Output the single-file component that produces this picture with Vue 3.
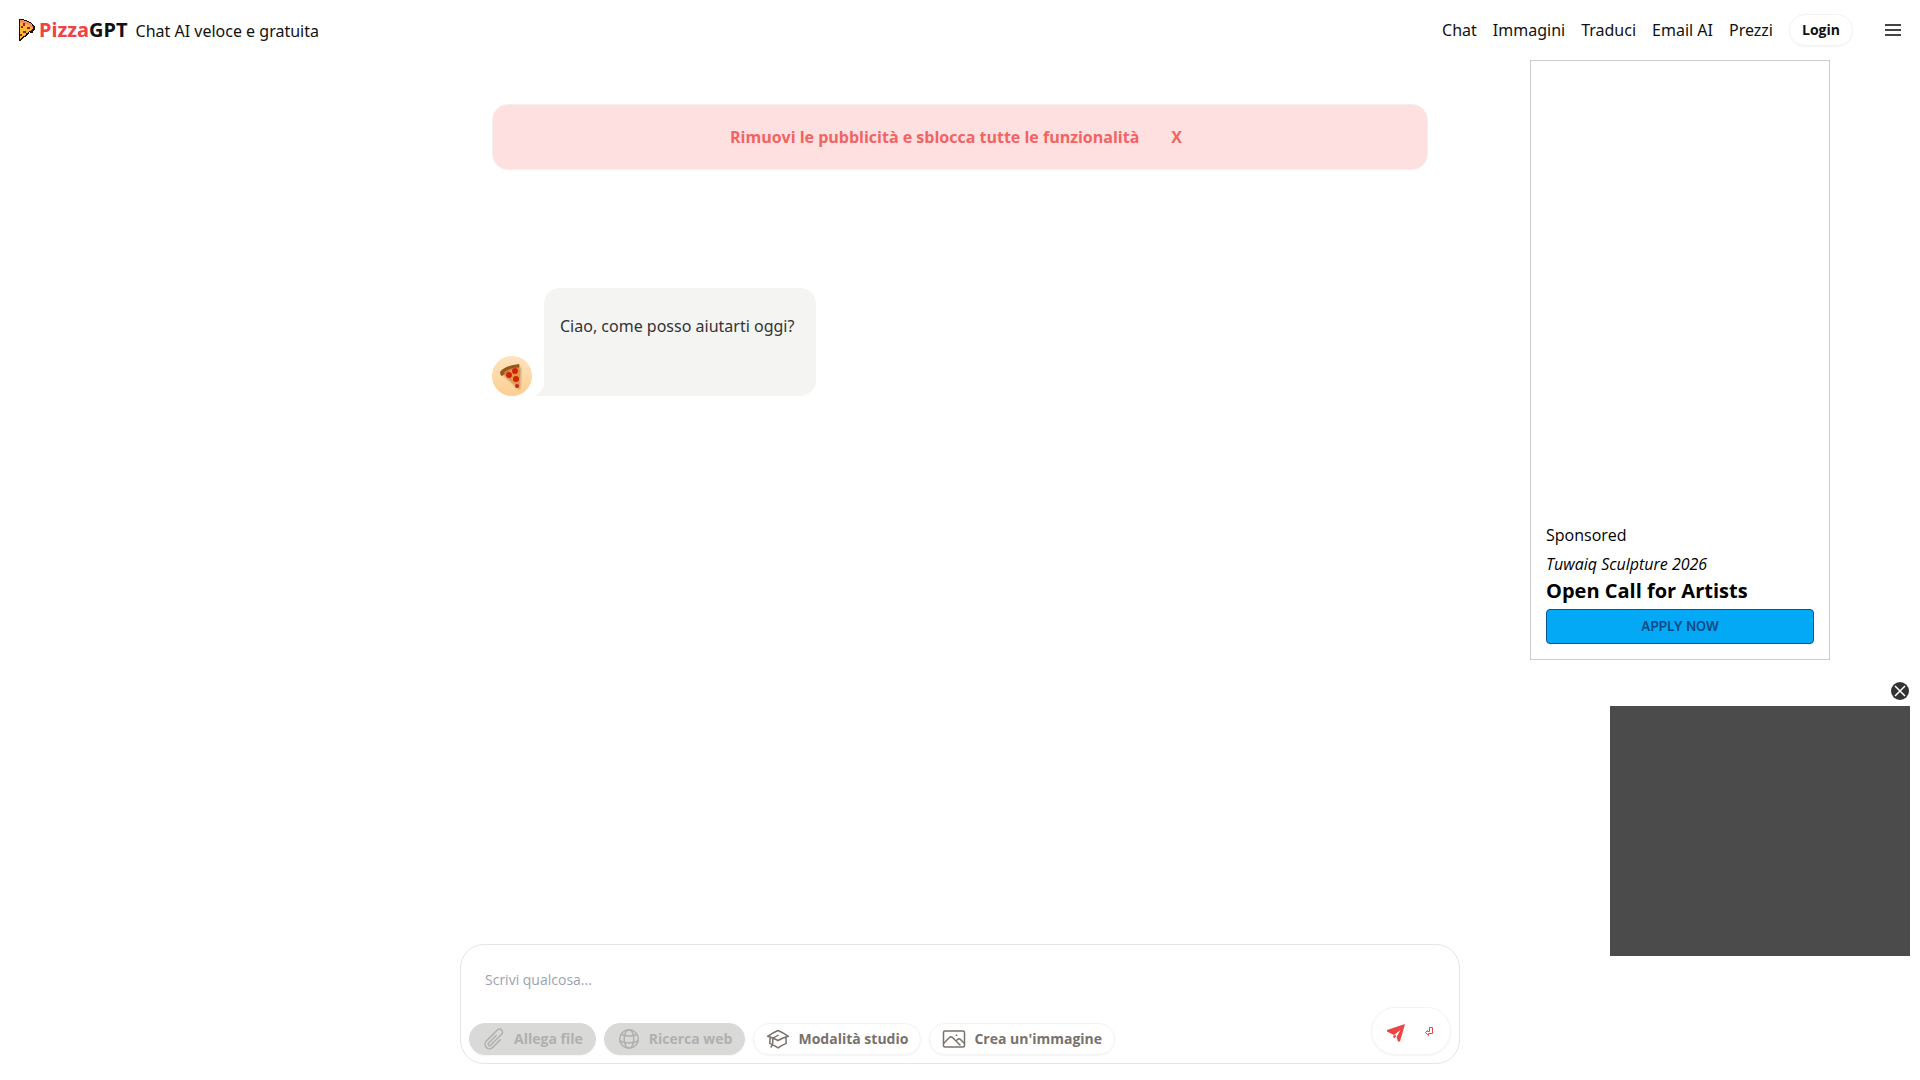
<script setup>
import { ref } from 'vue'

const links = ['Chat', 'Immagini', 'Traduci', 'Email AI', 'Prezzi']
const message = ref('')
</script>

<template>
  <div class="page">
    <header class="topbar">
      <a class="brand" href="#">
        <svg class="slice" viewBox="0 0 16 22" shape-rendering="crispEdges" aria-hidden="true">
          <path fill="#111" d="M0 0h5v1h3v1h2v1h2v1h1v1h1v1h1v1h1v4h-1v1h-1v2h-3v-1h-1v2H9v1H8v1H7v1H5v1H4v1H3v1H2v1H0z" />
          <path fill="#f9b934" d="M1 3h5v1h3v1h2v2h2v4h-1v1h-2v1H9v1H7v2H6v1H4v1H3v1H2v1H1z" />
          <path fill="#f58a5b" d="M1 1h4v1h3v1h2v1h2v1h1v2h1v3h-1V8h-2V6H9V5H6V4H1z" />
          <path fill="#a61e2c" d="M4 4h2v3H4zM8 8h3v2H8zM2 7h2v2H2zM4 12h3v2H4zM1 15h2v2H1z" />
        </svg>
        <span class="name"><span class="red">Pizza</span>GPT</span>
        <span class="tagline">Chat AI veloce e gratuita</span>
      </a>
      <nav class="nav">
        <a v-for="link in links" :key="link" href="#">{{ link }}</a>
        <button class="pill login" type="button">Login</button>
        <button class="menu" type="button" aria-label="Menu">
          <svg viewBox="0 0 16 16" stroke="#444" stroke-width="2" aria-hidden="true">
            <path d="M0 3h16M0 8h16M0 13h16" />
          </svg>
        </button>
      </nav>
    </header>

    <div class="body">
      <main class="chat">
        <div class="thread">
          <div class="banner">
            <a href="#">Rimuovi le pubblicità e sblocca tutte le funzionalità</a>
            <button type="button">X</button>
          </div>
          <div class="message">
            <svg class="avatar" viewBox="0 0 40 40" aria-hidden="true">
              <defs>
                <linearGradient id="plate" x1="0" y1="0" x2="0" y2="1">
                  <stop offset="0" stop-color="#ffe3bd" />
                  <stop offset="1" stop-color="#fdce92" />
                </linearGradient>
                <filter id="soft" x="-30%" y="-30%" width="160%" height="160%"><feGaussianBlur stdDeviation="0.6" /></filter>
                <filter id="shade" x="-30%" y="-30%" width="160%" height="160%"><feGaussianBlur stdDeviation="1.2" /></filter>
              </defs>
              <circle cx="20" cy="20" r="20" fill="url(#plate)" />
              <path d="M10 18 29 11 28 34z" fill="#8a6a4a" opacity=".6" filter="url(#shade)" />
              <g filter="url(#soft)">
                <path d="M10 17 27 11 27 32z" fill="#e59a3c" />
                <path d="M8 16Q14 9 27 8q1 2 0 4-11 1-17 8-2-1-2-4z" fill="#96551c" />
                <path d="M12 17Q18 12 27 12" stroke="#d79a45" fill="none" />
                <g fill="#cf2414">
                  <circle cx="17" cy="19" r="3" /><circle cx="23" cy="15" r="3" /><circle cx="24" cy="23" r="3" /><circle cx="25" cy="30" r="2" />
                </g>
              </g>
            </svg>
            <div class="bubble">
              <p>Ciao, come posso aiutarti oggi?</p>
              <svg class="tail" viewBox="0 0 12 12" aria-hidden="true"><path fill="#f4f4f3" d="M12 0Q8 9 1 12h11z" /></svg>
            </div>
          </div>
        </div>

        <form class="composer" @submit.prevent>
          <textarea v-model="message" rows="1" placeholder="Scrivi qualcosa..." aria-label="Messaggio"></textarea>
          <div class="tools">
            <button class="pill tool" type="button" disabled>
              <svg viewBox="0 0 24 24" aria-hidden="true">
                <path d="m18.4 12.7-7.7 7.7a4.5 4.5 0 0 1-6.4-6.4L15.3 3a3 3 0 0 1 4.3 4.3L8.6 18.3a1.5 1.5 0 0 1-2.1-2.1l7.7-7.7" />
              </svg>
              Allega file
            </button>
            <button class="pill tool" type="button" disabled>
              <svg viewBox="0 0 24 24" aria-hidden="true">
                <circle cx="12" cy="12" r="9.3" />
                <ellipse cx="12" cy="12" rx="4.8" ry="9.3" />
                <path d="M4 7.5q8 3 16 0M3 14q9 4 18 0" />
              </svg>
              Ricerca web
            </button>
            <button class="pill tool" type="button">
              <svg viewBox="0 0 24 24" aria-hidden="true">
                <path d="M4.3 10.1a60 60 0 0 0-.5 6.3A48 48 0 0 1 12 20.9a48 48 0 0 1 8.2-4.5 60 60 0 0 0-.4-6.3M1.6 9.3A60 60 0 0 1 12 3.5a60 60 0 0 1 10.4 5.8A51 51 0 0 0 12 13.5 51 51 0 0 0 1.6 9.3M6.8 15v-3.7A55 55 0 0 1 12 8.4M5 20a6 6 0 0 0 1.8-4.2V15" />
              </svg>
              Modalità studio
            </button>
            <button class="pill tool" type="button">
              <svg viewBox="0 0 24 24" aria-hidden="true">
                <rect x="1.5" y="4" width="21" height="16" rx="1.5" />
                <path d="m2 16 5.5-5.5q1.500-1.500 3 0L18 18M14 14l1.500-1.500q1.500-1.500 3 0L22 16M14.200 8.300h.6" />
              </svg>
              Crea un'immagine
            </button>
            <button class="pill send" type="submit" aria-label="Invia">
              <svg class="plane" viewBox="0 0 18 18" aria-hidden="true">
                <path fill="#ef4444" d="M18 0 13 17.5h-2L9.5 13 13.5 6 7 11 0 7.5V6z" />
                <path fill="#ef4444" d="m6 12 2.5-1.500.5 2-2 2z" />
              </svg>
              <svg class="enter" viewBox="0 0 8 9" fill="none" stroke="#ef4444" aria-hidden="true">
                <path d="M4.5.5h3v6h-4v2l-3-3 2-2v1h2z" />
              </svg>
            </button>
          </div>
        </form>
      </main>

      <aside class="ad">
        <p class="sponsored">Sponsored</p>
        <p class="event">Tuwaiq Sculpture 2026</p>
        <h2>Open Call for Artists</h2>
        <a class="apply" href="#">APPLY NOW</a>
      </aside>
    </div>

    <div class="player">
      <button type="button" aria-label="Chiudi">
        <svg viewBox="0 0 18 18" aria-hidden="true">
          <circle cx="9" cy="9" r="9" fill="#333" />
          <path d="m4 4 10 10M14 4 4 14" stroke="#fff" stroke-width="1.5" />
        </svg>
      </button>
      <div class="video"></div>
    </div>
  </div>
</template>

<style>
body {
  margin: 0;
  background: #fff;
}
</style>

<style scoped>
* {
  box-sizing: border-box;
}

.page {
  display: flex;
  flex-direction: column;
  min-height: 100vh;
  font-family: "Noto Sans", "Open Sans", sans-serif;
  font-size: 16px;
  line-height: 24px;
  color: #111;
}

p,
h2 {
  margin: 0;
}

a {
  color: inherit;
  text-decoration: none;
}

button {
  margin: 0;
  padding: 0;
  border: 0;
  background: none;
  color: inherit;
  font: inherit;
  cursor: pointer;
}

svg {
  display: block;
  flex: none;
}

.topbar {
  display: flex;
  align-items: center;
  justify-content: space-between;
  height: 60px;
  padding: 0 19px;
}

.brand {
  display: flex;
  align-items: center;
}

.slice {
  width: 16px;
  height: 22px;
}

.name {
  margin: 0 8px 0 4px;
  font-size: 20px;
  font-weight: 700;
}

.tagline {
  padding-top: 2px;
}

.red {
  color: #ef4444;
}

.nav {
  display: flex;
  align-items: center;
  gap: 16px;
}

.pill {
  border: 1px solid #f3f3f3;
  border-radius: 24px;
  box-shadow: 0 1px 2px rgb(0 0 0 / 5%);
  font-family: "Open Sans", "Noto Sans", sans-serif;
  font-size: 14px;
  font-weight: 700;
}

.login {
  width: 64px;
  height: 32px;
}

.menu {
  margin-left: 16px;
}

.menu svg {
  width: 16px;
  height: 16px;
}

.body {
  flex: 1;
  display: grid;
  grid-template-columns: 1fr minmax(0, 1000px) 1fr;
}

.chat {
  grid-column: 2;
  display: flex;
  flex-direction: column;
  justify-content: space-between;
  padding-bottom: 16px;
}

.thread {
  padding: 44px 32px;
}

.banner {
  display: flex;
  align-items: center;
  justify-content: center;
  gap: 32px;
  height: 66px;
  border: 1px solid #f5eeee;
  border-radius: 16px;
  background: #fee0e0;
  color: #f26363;
  font-family: "Open Sans", "Noto Sans", sans-serif;
  font-weight: 700;
}

.banner button {
  padding-right: 8px;
}

.message {
  display: flex;
  align-items: flex-end;
  gap: 12px;
  margin-top: 118px;
}

.avatar {
  width: 40px;
  height: 40px;
}

.bubble {
  position: relative;
  min-width: 272px;
  min-height: 108px;
  padding: 26px 16px;
  border-radius: 16px 16px 16px 0;
  background: #f4f4f3;
  color: #333;
}

.tail {
  position: absolute;
  bottom: 0;
  left: -11px;
  width: 12px;
  height: 12px;
}

.composer {
  display: flex;
  flex-direction: column;
  justify-content: space-between;
  height: 120px;
  padding: 8px;
  border: 1px solid #e5e5e5;
  border-radius: 24px;
}

textarea {
  height: 56px;
  padding: 15px 16px;
  border: 0;
  outline: 0;
  background: none;
  resize: none;
  color: inherit;
  font: inherit;
  font-family: "Open Sans", "Noto Sans", sans-serif;
  font-size: 14px;
}

textarea::placeholder {
  color: #9ca3af;
}

.tools {
  display: flex;
  align-items: flex-end;
  gap: 8px;
  height: 48px;
}

.tool {
  display: flex;
  align-items: center;
  gap: 8px;
  height: 32px;
  padding: 0 12px;
  color: #78716c;
  white-space: nowrap;
}

.tool:disabled {
  border-color: #d9d9d8;
  background: #d9d9d8;
  color: #b0b0af;
}

.tool svg {
  width: 24px;
  height: 24px;
  fill: none;
  stroke: currentColor;
  stroke-width: 1.5;
  stroke-linecap: round;
  stroke-linejoin: round;
}

.send {
  display: flex;
  align-items: center;
  justify-content: space-between;
  width: 80px;
  height: 48px;
  margin-left: auto;
  padding: 4px 17px 0 15px;
}

.plane {
  width: 18px;
  height: 18px;
}

.enter {
  width: 8px;
  height: 9px;
  margin-bottom: 4px;
}

.ad {
  justify-self: end;
  display: flex;
  flex-direction: column;
  justify-content: flex-end;
  width: 300px;
  height: 600px;
  margin-right: 90px;
  padding: 15px;
  border: 1px solid #ccc;
  color: #000;
  font-family: "Open Sans", "Noto Sans", sans-serif;
}

.event {
  margin: 5px 0 1px;
  font-style: italic;
}

h2 {
  font-size: 20px;
  font-weight: 700;
  line-height: 28px;
}

.apply {
  margin-top: 4px;
  border: 1px solid #0b5394;
  border-radius: 4px;
  background: #03a9f4;
  color: #0b4a86;
  font-family: Inter, sans-serif;
  font-size: 13px;
  font-weight: 600;
  line-height: 33px;
  text-align: center;
}

.player {
  position: fixed;
  right: 10px;
  bottom: 124px;
  display: flex;
  flex-direction: column;
  align-items: flex-end;
  gap: 6px;
  width: 300px;
}

.player button {
  padding-right: 1px;
}

.player svg {
  width: 18px;
  height: 18px;
}

.video {
  width: 100%;
  height: 250px;
  background: #4b4b4b;
}
</style>
